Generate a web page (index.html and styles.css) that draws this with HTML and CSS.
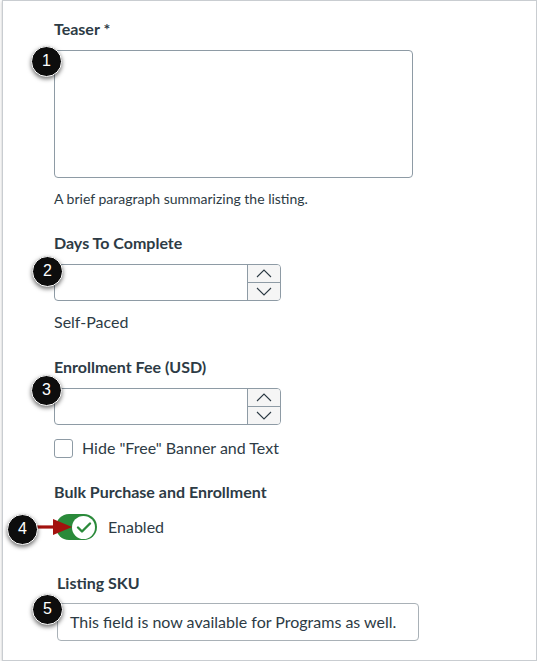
FILE: index.html
```html
<!DOCTYPE html>
<html lang="en">
<head>
<meta charset="utf-8">
<title>Listing settings</title>
<link rel="stylesheet" href="styles.css">
</head>
<body>
<div class="frame">
  <div class="label l-teaser">Teaser *</div>
  <div class="control">
    <span class="badge b1">1</span>
    <div class="textarea"></div>
  </div>
  <div class="help">A brief paragraph summarizing the listing.</div>

  <div class="label l-sec">Days To Complete</div>
  <div class="control">
    <span class="badge b2">2</span>
    <div class="numinput">
      <div class="numfield"></div>
      <div class="spinner">
        <div class="spin"><svg width="16" height="9" viewBox="0 0 16 9"><path d="M1 8 L8 1 L15 8" fill="none" stroke="#2d3b45" stroke-width="1.1"/></svg></div>
        <div class="spin spin-down"><svg width="16" height="9" viewBox="0 0 16 9"><path d="M1 1 L8 8 L15 1" fill="none" stroke="#2d3b45" stroke-width="1.1"/></svg></div>
      </div>
    </div>
  </div>
  <div class="plain">Self-Paced</div>

  <div class="label l-sec">Enrollment Fee (USD)</div>
  <div class="control">
    <span class="badge b3">3</span>
    <div class="numinput">
      <div class="numfield"></div>
      <div class="spinner">
        <div class="spin"><svg width="16" height="9" viewBox="0 0 16 9"><path d="M1 8 L8 1 L15 8" fill="none" stroke="#2d3b45" stroke-width="1.1"/></svg></div>
        <div class="spin spin-down"><svg width="16" height="9" viewBox="0 0 16 9"><path d="M1 1 L8 8 L15 1" fill="none" stroke="#2d3b45" stroke-width="1.1"/></svg></div>
      </div>
    </div>
  </div>
  <div class="checkrow">
    <span class="checkbox"></span>
    <span class="checklabel">Hide "Free" Banner and Text</span>
  </div>

  <div class="label l-bulk">Bulk Purchase and Enrollment</div>
  <div class="togglerow">
    <span class="badge b4">4</span>
    <span class="toggle"><span class="knob"><svg width="16" height="13" viewBox="0 0 16 13"><path d="M2 6.5 L6 10.5 L14 2.5" fill="none" stroke="#2a8a3a" stroke-width="2.4" stroke-linecap="round" stroke-linejoin="round"/></svg></span></span>
    <svg class="arrow" width="36" height="16" viewBox="0 0 36 16"><path d="M0 8 H18" stroke="#a3120e" stroke-width="3.2"/><path d="M16 0 L35 8 L16 16 Z" fill="#a3120e"/></svg>
    <span class="togglelabel">Enabled</span>
  </div>

  <div class="label l-sku">Listing SKU</div>
  <div class="control skuwrap">
    <span class="badge b5">5</span>
    <div class="skubox">This field is now available for Programs as well.</div>
  </div>
</div>
</body>
</html>
```

FILE: styles.css
```css
* { box-sizing: border-box; }
html, body { margin: 0; padding: 0; background: #ffffff; }
body {
  font-family: Lato, "Liberation Sans", sans-serif;
  color: #2d3b45;
}
.frame {
  margin-left: 2px;
  width: 535px;
  height: 661px;
  border: 1px solid #c9cdd1;
  box-shadow: 0 1px 3px rgba(0,0,0,0.25);
  padding: 0 0 0 51px;
}
.label {
  font-weight: 700;
  font-size: 16px;
  line-height: 20px;
  height: 20px;
}
.l-teaser { margin-top: 18px; }
.l-sec { margin-top: 25px; }
.l-bulk { margin-top: 24px; }
.l-sku { margin-top: 33px; margin-left: 3px; }
.control { position: relative; margin-top: 11px; }
.textarea {
  width: 359px;
  height: 128px;
  border: 1px solid #8e9ba5;
  border-radius: 4px;
}
.help {
  margin-top: 12px;
  font-size: 14px;
  line-height: 18px;
}
.numinput {
  display: flex;
  width: 227px;
  height: 37px;
  border: 1px solid #8e9ba5;
  border-radius: 4px;
  overflow: hidden;
}
.numfield { flex: 1; }
.spinner {
  width: 33px;
  display: flex;
  flex-direction: column;
  border-left: 1px solid #8e9ba5;
  background: #f5f5f5;
}
.spin {
  flex: 1;
  display: flex;
  align-items: center;
  justify-content: center;
}
.spin-down { border-top: 1px solid #8e9ba5; }
.plain {
  margin-top: 11px;
  font-size: 16px;
  line-height: 20px;
}
.checkrow {
  margin-top: 13px;
  display: flex;
  align-items: center;
  gap: 9px;
  height: 20px;
}
.checkbox {
  width: 19px;
  height: 19px;
  border: 1px solid #8e9ba5;
  border-radius: 3px;
  background: #fff;
}
.checklabel { font-size: 16px; line-height: 20px; }
.togglerow {
  position: relative;
  margin-top: 12px;
  height: 26px;
  display: flex;
  align-items: center;
  padding-left: 2px;
}
.toggle {
  width: 41px;
  height: 26px;
  border-radius: 13px;
  background: #2a8a3a;
  display: flex;
  align-items: center;
  justify-content: flex-end;
  padding-right: 2px;
}
.knob {
  width: 23px;
  height: 23px;
  border-radius: 50%;
  background: #fff;
  display: flex;
  align-items: center;
  justify-content: center;
}
.togglelabel { margin-left: 11px; font-size: 16px; line-height: 20px; }
.arrow { position: absolute; left: -17px; top: 5px; }
.skuwrap { margin-left: 3px; margin-top: 10px; }
.skubox {
  width: 362px;
  height: 38px;
  border: 1px solid #a9b1b7;
  border-radius: 4px;
  padding-left: 12px;
  font-size: 16px;
  line-height: 36px;
}
.badge {
  position: absolute;
  width: 31px;
  height: 31px;
  border-radius: 50%;
  background: #0d0d0d;
  border: 1.5px solid #ffffff;
  box-shadow: 0 2px 4px rgba(0,0,0,0.55);
  color: #ffffff;
  font-family: "Liberation Sans", Arial, sans-serif;
  font-size: 16px;
  line-height: 28px;
  text-align: center;
  z-index: 2;
}
.b1 { left: -23px; top: -4px; }
.b2 { left: -22px; top: -8px; }
.b3 { left: -23px; top: -13px; }
.b4 { left: -47px; top: 0px; }
.b5 { left: -25px; top: -9px; }
```
